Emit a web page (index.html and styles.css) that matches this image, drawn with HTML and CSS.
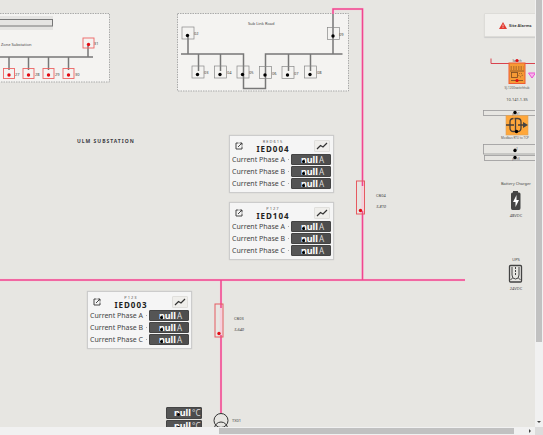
FILE: index.html
```
<!DOCTYPE html>
<html lang="en">
<head>
<meta charset="utf-8">
<title>Ulm Substation</title>
<link rel="stylesheet" href="styles.css">
</head>
<body>
<div class="viewer">
<main class="canvas">
<svg class="diagram" aria-label="Single line diagram">
  <defs>
    <g id="red-node"><rect class="red-box" x="-5.5" y="-5" width="11" height="10"/><circle class="red-dot" r="1.7" cy="1.5"/></g>
    <g id="node"><rect class="box" x="-6" y="-6" width="12" height="12"/><circle class="dot" r="1.7" cx="-.5" cy="2.5"/></g>
  </defs>

  <rect class="zone" x="-5" y="13.5" width="114.5" height="68.5"/>
  <rect class="shade" x="0" y="16" width="53" height="14"/>
  <rect class="bar" x="-3" y="19.5" width="55.5" height="6.5"/>
  <path class="bus" d="M0 57H93M88 57V46M9 57V70M28.5 57V70M48.5 57V70M68.5 57V70"/>
  <use href="#red-node" x="88.5" y="43"/><use href="#red-node" x="9" y="73.5"/><use href="#red-node" x="28.5" y="73.5"/><use href="#red-node" x="48.5" y="73.5"/><use href="#red-node" x="68.5" y="73.5"/>
  <g class="tiny">
    <text x="94" y="45">31</text><text x="15" y="76">27</text><text x="35" y="76">28</text><text x="55" y="76">29</text><text x="75" y="76">30</text>
    <text x="1" y="46">Zone Substation</text>
  </g>

  <rect class="zone" x="177.5" y="13.5" width="171" height="77.5"/>
  <path class="bus" d="M188 37V54M181 54H243.5V88.5H265.5V54H342.5M333 12V54M198.5 54V71M220.5 54V71M288.5 54V71M310.5 54V71"/>
  <use href="#node" x="188" y="33"/><use href="#node" x="333.5" y="33.5"/><use href="#node" x="198" y="72"/><use href="#node" x="220.5" y="72"/><use href="#node" x="243" y="72"/><use href="#node" x="265.5" y="72.5"/><use href="#node" x="288" y="72.5"/><use href="#node" x="310.5" y="72"/>
  <g class="tiny">
    <text x="248" y="25">Sub Link Road</text>
    <text x="194" y="35">02</text><text x="339" y="36">09</text><text x="204" y="74">03</text><text x="227" y="74">04</text><text x="249" y="74">05</text><text x="272" y="75">06</text><text x="294" y="75">07</text><text x="317" y="74">08</text>
  </g>

  <path class="halo" d="M333 14V9H362.5V280M0 280H465M221 280V413"/>
  <path class="feeder" d="M333 14V9H362.5V186M362.5 211V280M0 280H465M221 280V308M221 335V413"/>
  <rect class="breaker" x="356.5" y="181" width="8" height="33"/><circle class="red-dot" cx="360.5" cy="210.5" r="1.7"/>
  <rect class="breaker" x="215" y="304" width="8" height="33"/><circle class="red-dot" cx="219" cy="333.5" r="1.7"/>
  <g class="tiny">
    <text x="376" y="197">CB04</text><text class="slant" x="376" y="208">3-810</text>
    <text x="234" y="320">CB03</text><text class="slant" x="234" y="331">3-640</text>
    <text x="232" y="422">TX01</text>
  </g>
  <circle class="winding" cx="221" cy="420.5" r="7"/><circle class="winding" cx="221" cy="428.5" r="6.5"/>
  <text class="title" x="77" y="143">ULM SUBSTATION</text>

  <path class="alarm-line" d="M491 58.5V63.5H536"/>
  <rect class="device" x="509" y="63" width="16" height="20.5"/>
  <path class="stroke" d="M510.5 67H523.5M510.5 69H523.5" stroke-dasharray="1.5 1"/>
  <rect class="stroke" x="511.5" y="72.5" width="6" height="5"/>
  <circle class="stroke" cx="520.5" cy="75" r="1.8" stroke-dasharray="1 1"/>
  <path class="stroke" d="M510 71H524M511 80.5H523"/>
  <path class="pink-mark" d="M528.5 73H535.5L532 78Z"/>
  <g class="frame"><rect x="483.5" y="110.5" width="56" height="5"/><rect x="483.5" y="144.5" width="56" height="9.5"/><rect x="484.5" y="155.5" width="56" height="5"/></g>
  <rect class="gateway" x="506" y="115.5" width="22" height="19.5"/>
  <path class="gateway-line" d="M506 125H514M518 125H524M514.5 118.5H517.5Q521 118.5 521 122V128Q521 131.5 517.5 131.5H513.5Q510 131.5 510 128V122Q510 118.5 513.5 118.5M515.5 118.5V131.5"/>
  <path class="dark" d="M523 122L528 125L523 128Z"/>
  <g class="mini">
    <text x="517" y="62">Switch</text><text x="517" y="89">SJ-1200switchhub</text>
    <text x="515" y="139">Modbus RTU to TCP</text>
    <text x="516" y="115">port1</text><text x="516" y="150">p2</text><text x="516" y="160">port3</text>
  </g>
  <circle class="red-dot" cx="517" cy="60.5" r="1.6"/><circle class="red-dot" cx="517" cy="80.5" r="1.6"/>
  <circle class="dot" cx="516.5" cy="131.5" r="1.7"/><circle class="dot" cx="515" cy="112.5" r="1.7"/><circle class="dot" cx="515" cy="150.5" r="1.7"/><circle class="dot" cx="515" cy="157.5" r="1.7"/>
  <g class="tiny middle">
    <text x="517" y="101">10.141.1.35</text><text x="516" y="185">Battery Charger</text><text x="516" y="217">48VDC</text><text x="516" y="261">UPS</text><text x="516" y="290">24VDC</text>
  </g>
  <path class="dark" d="M513 191H518V192.5H519Q520.5 192.5 520.5 194V208Q520.5 210 519 210H512.5Q511 210 511 208V194Q511 192.5 512.5 192.5H513Z"/>
  <path class="bolt" d="M516.5 195L513 202H515.5V207L519 200H516.5Z"/>
  <rect class="ups-body" x="509.5" y="265.5" width="12" height="16.5" rx="1"/>
  <path class="ups-line" d="M512 267V275Q512 279 515.5 279Q519 279 519 275V267M510.5 280L512.5 278M520.5 280L518.5 278"/>
  <path class="ups-line" stroke-dasharray="2 1" d="M515.5 267V275"/>
</svg>

<section class="card card-ied004">
  <header class="card-head">
    <button class="open" aria-label="Open IED004"><svg viewBox="0 0 8 8"><path d="M3.5 1H1V7H7V4.5M4.5 1H7V3.5M3 5L7 1"/></svg></button>
    <h2><small>RED615</small>IED004</h2>
    <button class="trend" aria-label="Trend IED004"><svg viewBox="0 0 14 9"><path d="M2 7.5L5.5 4L8 5.5L12 1.5"/></svg></button>
  </header>
  <dl>
    <dt>Current Phase A</dt><dd><b>null</b><span>A</span></dd>
    <dt>Current Phase B</dt><dd><b>null</b><span>A</span></dd>
    <dt>Current Phase C</dt><dd><b>null</b><span>A</span></dd>
  </dl>
</section>
<section class="card card-ied104">
  <header class="card-head">
    <button class="open" aria-label="Open IED104"><svg viewBox="0 0 8 8"><path d="M3.5 1H1V7H7V4.5M4.5 1H7V3.5M3 5L7 1"/></svg></button>
    <h2><small>P127</small>IED104</h2>
    <button class="trend" aria-label="Trend IED104"><svg viewBox="0 0 14 9"><path d="M2 7.5L5.5 4L8 5.5L12 1.5"/></svg></button>
  </header>
  <dl>
    <dt>Current Phase A</dt><dd><b>null</b><span>A</span></dd>
    <dt>Current Phase B</dt><dd><b>null</b><span>A</span></dd>
    <dt>Current Phase C</dt><dd><b>null</b><span>A</span></dd>
  </dl>
</section>
<section class="card card-ied003">
  <header class="card-head">
    <button class="open" aria-label="Open IED003"><svg viewBox="0 0 8 8"><path d="M3.5 1H1V7H7V4.5M4.5 1H7V3.5M3 5L7 1"/></svg></button>
    <h2><small>P123</small>IED003</h2>
    <button class="trend" aria-label="Trend IED003"><svg viewBox="0 0 14 9"><path d="M2 7.5L5.5 4L8 5.5L12 1.5"/></svg></button>
  </header>
  <dl>
    <dt>Current Phase A</dt><dd><b>null</b><span>A</span></dd>
    <dt>Current Phase B</dt><dd><b>null</b><span>A</span></dd>
    <dt>Current Phase C</dt><dd><b>null</b><span>A</span></dd>
  </dl>
</section>
<div class="temps">
  <div class="reading"><b>null</b><span>°C</span></div>
  <div class="reading"><b>null</b><span>°C</span></div>
</div>
<button class="alarms"><svg viewBox="0 0 8 7"><path class="tri" d="M4 0L8 7H0Z"/><path class="mark" d="M4 2.5V4.5M4 5.2V6"/></svg>Site Alarms</button>
</main>
<div class="vbar"><div class="vthumb"></div><svg viewBox="0 0 6 4"><path d="M1 1H5L3 3Z"/></svg></div>
<div class="hbar"><div class="hthumb"></div><svg viewBox="0 0 4 6"><path d="M1 1V5L3 3Z"/></svg></div>
<div class="corner"></div>
</div>
</body>
</html>
```
FILE: styles.css
```
* { box-sizing: border-box; }
body { margin: 0; background: #e7e6e2; color: #444; font-family: "Noto Sans", sans-serif; }
.viewer { display: grid; grid-template-columns: minmax(0, 1fr) 8px; grid-template-rows: minmax(0, 1fr) 8px; height: 100vh; overflow: hidden; }
.canvas { position: relative; overflow: hidden; }
.diagram { position: absolute; inset: 0; width: 100%; height: 100%; }
svg { display: block; fill: none; }

.zone { fill: #f4f3f1; stroke: #aaa; stroke-dasharray: 1.5 1; }
.shade { fill: #e5e4e2; }
.bar { stroke: #777; }
.bus { stroke: #777; stroke-width: 1.5; }
.box { stroke: #888; stroke-width: .7; }
.red-box { stroke: #ee6464; stroke-width: .9; }
.breaker { stroke: #e65a60; }
.red-dot { fill: #e30b13; }
.dot { fill: #000; }
.halo { stroke: #f6cfdc; stroke-width: 2.5; }
.feeder { stroke: #f0468f; stroke-width: 1.5; }
.winding { stroke: #333; }
.alarm-line { stroke: #d8434e; }
.device { fill: #f59a35; stroke: #ef5b32; }
.stroke { stroke: #7a4a20; stroke-width: .8; }
.pink-mark { fill: #f7b4ec; stroke: #ee4fd4; }
.frame { stroke: #999; stroke-width: .8; }
.gateway { fill: #ffa73a; stroke: #d9a05c; stroke-width: .6; }
.gateway-line { stroke: #49403a; stroke-width: 1.3; }
.dark { fill: #444; }
.bolt { fill: #fff; }
.ups-body { fill: #e7e6e2; stroke: #444; stroke-width: 1.3; }
.ups-line { stroke: #444; }

.tiny { font-size: 4px; fill: #444; }
.mini { font-size: 3px; fill: #555; text-anchor: middle; }
.slant { font-style: italic; }
.middle { text-anchor: middle; }
.title { font-size: 5px; font-weight: 700; letter-spacing: 1px; fill: #3c3c44; }

.card { position: absolute; width: 105px; padding: 2px 2px 3px; background: #f5f5f5; border: 1px solid #ccc; border-radius: 1px; box-shadow: 0 0 1px #aaa; }
.card-ied004 { left: 229px; top: 135px; }
.card-ied104 { left: 229px; top: 202px; }
.card-ied003 { left: 87px; top: 291px; }
.card-head { display: flex; align-items: center; height: 16px; }
button { margin: 0; padding: 0; border: 0; background: none; color: inherit; font-family: inherit; }
.open { width: 14px; padding: 0 3px; }
.open svg { width: 8px; height: 8px; stroke: #333; stroke-width: .9; }
.card h2 { flex: 1; margin: 0; padding-right: 14px; font-size: 8px; line-height: 9px; letter-spacing: 1px; text-align: center; color: #222; }
.card small { display: block; font-size: 4px; line-height: 5px; font-weight: 400; color: #555; }
.trend { width: 16px; height: 12px; margin-right: 1px; background: #efeeeb; border: 1px solid #e0dfdc; border-radius: 1px; }
.trend svg { width: 14px; height: 10px; stroke: #333; stroke-width: 1.2; }
.card dl { display: grid; grid-template-columns: 1fr 40px; row-gap: 1px; margin: 0; }
.card dt { display: flex; font-size: 7px; line-height: 11px; white-space: nowrap; color: #444; }
.card dt::after { content: ""; width: 1px; height: 1px; margin: 5px 2px 0 auto; background: #aaa; }
.card dd, .reading { position: relative; display: flex; height: 11px; margin: 0; background: #555; border: 1px solid #444; border-radius: 1px; color: #ddd; font-size: 8px; line-height: 9px; }
dd b, .reading b { width: 26px; font-size: 9px; text-align: right; color: #fff; }
dd span, .reading span { flex: 1; padding-left: 1px; background: #4d4d4d; }
dd::before, .reading::before { content: ""; position: absolute; left: 10px; top: 5px; width: 3px; height: 3px; border-radius: 50%; background: #000; }
.temps { position: absolute; left: 166px; top: 407px; width: 36px; display: grid; row-gap: 1px; }
.reading { height: 12px; }
.reading b { width: 24px; }
.reading::before { left: 10px; }
.alarms { position: absolute; left: 484px; top: 13px; width: 64px; height: 24px; padding-left: 14px; display: flex; align-items: center; gap: 2px; background: #f1f0ed; border: 1px solid #dddcd8; border-radius: 1px; font-size: 4px; font-weight: 700; white-space: nowrap; box-shadow: 0 1px 1px #ccc; }
.alarms svg { width: 8px; height: 7px; }
.tri { fill: #e23b30; }
.mark { stroke: #fff; stroke-width: .7; }

.vbar { display: flex; flex-direction: column; align-items: center; background: #f1f1f1; }
.vthumb { width: 6px; height: 80%; background: #c1c1c1; }
.hbar { display: flex; align-items: center; background: #f1f1f1; }
.hthumb { width: 55%; height: 6px; margin-left: 41%; background: #c1c1c1; }
.vbar svg { width: 6px; height: 4px; margin-top: auto; margin-bottom: 3px; fill: #444; }
.hbar svg { width: 4px; height: 6px; margin-left: auto; margin-right: 3px; fill: #444; }
.corner { background: #dcdcdc; }
```
